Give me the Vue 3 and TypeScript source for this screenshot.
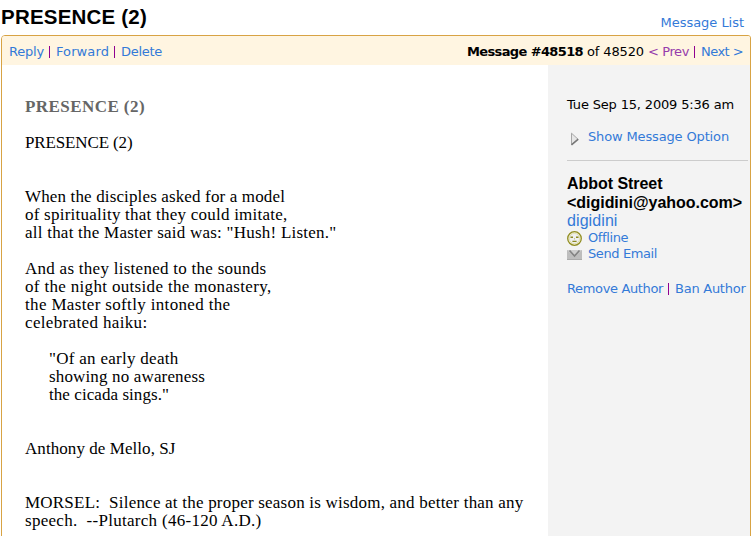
<script setup lang="ts">
// Spreads a line's letters so that it takes up the given width in pixels.
const vFit = {
  mounted(el: HTMLElement, binding: { value: number }) {
    const count = (el.textContent ?? '').length
    const natural = el.getBoundingClientRect().width
    el.style.letterSpacing = `${(binding.value - natural) / count}px`
  },
}

interface Line {
  text: string
  width: number
  quote?: boolean
}

const blank: Line = { text: '', width: 0 }

const lines: Line[] = [
  { text: 'PRESENCE (2)', width: 107.5 },
  blank,
  blank,
  { text: 'When the disciples asked for a model', width: 260 },
  { text: 'of spirituality that they could imitate,', width: 262.5 },
  { text: 'all that the Master said was: "Hush! Listen."', width: 311.5 },
  blank,
  { text: 'And as they listened to the sounds', width: 241.5 },
  { text: 'of the night outside the monastery,', width: 246.5 },
  { text: 'the Master softly intoned the', width: 205.5 },
  { text: 'celebrated haiku:', width: 122.5 },
  blank,
  { text: '"Of an early death', width: 129.5, quote: true },
  { text: 'showing no awareness', width: 156, quote: true },
  { text: 'the cicada sings."', width: 120, quote: true },
  blank,
  blank,
  { text: 'Anthony de Mello, SJ', width: 150.5 },
  blank,
  blank,
  { text: 'MORSEL:  Silence at the proper season is wisdom, and better than any', width: 498.5 },
  { text: 'speech.  --Plutarch (46-120 A.D.)', width: 236.5 },
]
</script>

<template>
  <div class="page">
    <header class="top">
      <h1><span v-fit="146">PRESENCE (2)</span></h1>
      <a class="list"><span v-fit="83.5">Message List</span></a>
    </header>
    <section class="panel">
      <nav class="bar">
        <div class="actions">
          <a><span v-fit="35">Reply</span></a><i></i><a><span v-fit="53">Forward</span></a><i></i><a><span v-fit="41">Delete</span></a>
        </div>
        <div class="pager">
          <b><span v-fit="116">Message #48518</span></b>
          <span v-fit="57" class="count">of 48520</span>
          <a class="visited"><span v-fit="41">&lt; Prev</span></a><i></i><a><span v-fit="42">Next &gt;</span></a>
        </div>
      </nav>
      <div class="content">
        <article class="message">
          <h2><span v-fit="120">PRESENCE (2)</span></h2>
          <p v-for="(line, n) in lines" :key="n" :class="{ quote: line.quote }">
            <span v-if="line.text" v-fit="line.width">{{ line.text }}</span>
          </p>
        </article>
        <aside class="side">
          <div class="date"><span v-fit="167">Tue Sep 15, 2009 5:36 am</span></div>
          <div class="option">
            <svg class="arrow" width="10" height="14" viewBox="0 0 10 14">
              <path d="M1.5 1.2 8 7.2 1.5 12.6Z" fill="#e6e6e6" stroke="#a6a6a6" />
              <path d="M8.3 7.2 1.5 12.8" fill="none" stroke="#777" stroke-width="1.5" />
            </svg>
            <a><span v-fit="141">Show Message Option</span></a>
          </div>
          <div class="author">
            <h3><span v-fit="95.5">Abbot Street</span></h3>
            <h3><span v-fit="175">&lt;digidini@yahoo.com&gt;</span></h3>
            <div class="nick"><a><span v-fit="50.5">digidini</span></a></div>
            <div class="contact">
              <svg width="15" height="16" viewBox="0 0 15 16">
                <circle cx="7.5" cy="8.5" r="6.8" fill="#f1efcf" stroke="#918d22" stroke-width="1.3" />
                <circle cx="7.5" cy="8.5" r="5.1" fill="#efefef" stroke="#d5d2a0" stroke-width=".6" />
                <path d="M3.5 7.2H6M9 7.2h2.5M5.4 11.4h4.2" stroke="#8d8922" stroke-width="1.4" />
                <path d="M7.5 8v1.5" stroke="#c7c496" />
              </svg>
              <a><span v-fit="40">Offline</span></a>
            </div>
            <div class="contact">
              <svg width="15" height="16" viewBox="0 0 15 16">
                <rect y="4" width="15" height="10" fill="#bdbdbd" />
                <path d="M0 4h15L7.5 11Z" fill="#cecece" />
                <path d="M2.5 4.5 7.5 10l5-5.5" fill="none" stroke="#838383" stroke-width="1.7" />
                <path d="M0 13.5h15" stroke="#aaa" />
              </svg>
              <a><span v-fit="69">Send Email</span></a>
            </div>
          </div>
          <div class="manage">
            <a><span v-fit="96">Remove Author</span></a><i></i><a><span v-fit="70.5">Ban Author</span></a>
          </div>
        </aside>
      </div>
    </section>
  </div>
</template>

<style>
body {
  overflow: hidden;
  background: #fff;
}
</style>

<style scoped>
.page {
  width: 751px;
  height: 536px;
  overflow: hidden;
  color: #000;
  font: 13px/16px Verdana, "DejaVu Sans", sans-serif;
  white-space: nowrap;
}
h1, h2, h3, p {
  margin: 0;
}
span {
  display: inline-block;
  white-space: pre;
}
a {
  color: #337ad8;
}
.top {
  display: flex;
  justify-content: space-between;
  height: 35px;
  padding: 0 7px 0 1px;
}
h1 {
  padding-top: 5px;
  font: bold 20.5px/24px Arial, "Liberation Sans", sans-serif;
}
.list {
  padding-top: 15px;
}
.panel {
  box-sizing: border-box;
  height: 520px;
  margin-left: 1px;
  overflow: hidden;
  border: 1px solid #d8a344;
  border-radius: 4px 3px 0 0;
}
.bar {
  display: flex;
  justify-content: space-between;
  height: 21px;
  padding: 8px 7px 0;
  background: #fff5e1;
}
.actions, .pager, .manage {
  display: flex;
}
i {
  width: 1px;
  height: 12px;
  margin: 2px 6px 0 5px;
  background: #900090;
}
.count {
  margin: 0 4px;
}
.visited {
  color: #963cac;
}
.content {
  display: flex;
  height: 480px;
}
.message {
  box-sizing: border-box;
  width: 546px;
  padding: 33px 23px 0;
  font: 17px/18px Georgia, "Liberation Serif", serif;
}
h2 {
  margin-bottom: 18px;
  color: #666;
  font: bold 17px/18px Georgia, "Liberation Serif", serif;
}
p {
  height: 18px;
}
.quote {
  padding-left: 24px;
}
.side {
  flex: 1;
  padding: 32px 0 0 19px;
  background: #f3f3f3;
}
.option {
  display: flex;
  height: 31px;
  margin-top: 16px;
}
.arrow {
  margin: 3px 8px 0 3px;
}
.author {
  width: 181px;
  padding-top: 13px;
  border-top: 1px solid #ccc;
}
h3 {
  font: bold 16px/19px Arial, "Liberation Sans", sans-serif;
}
.nick {
  font: 16px/18px Arial, "Liberation Sans", sans-serif;
}
.contact {
  display: flex;
  gap: 6px;
  height: 16px;
}
.manage {
  margin-top: 19px;
}
</style>
